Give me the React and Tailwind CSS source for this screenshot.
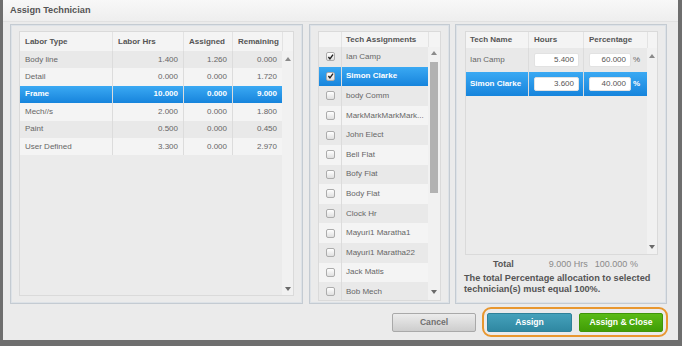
import React from 'react';

const labor = [
  ['Body line', '1.400', '1.260', '0.000'],
  ['Detail', '0.000', '0.000', '1.720'],
  ['Frame', '10.000', '0.000', '9.000'],
  ['Mech//s', '2.000', '0.000', '1.800'],
  ['Paint', '0.500', '0.000', '0.450'],
  ['User Defined', '3.300', '0.000', '2.970'],
];

const techs = [
  'Ian Camp', 'Simon Clarke', 'body Comm', 'MarkMarkMarkMark...', 'John Elect', 'Bell Flat',
  'Bofy Flat', 'Body Flat', 'Clock Hr', 'Mayuri1 Maratha1', 'Mayuri1 Maratha22', 'Jack Matis', 'Bob Mech',
];

const rowBg = (i, sel) =>
  sel ? 'bg-linear-to-b from-[#3aa9f3] to-[#1584dc] text-white font-bold' : i % 2 === 0 ? 'bg-[#e9e9e9] text-[#666]' : 'bg-[#f4f4f4] text-[#666]';

const Up = () => (
  <svg width="6" height="4" viewBox="0 0 6 4"><path d="M0 4 L3 0 L6 4 Z" fill="#8a8a8a" /></svg>
);
const Down = () => (
  <svg width="6" height="4" viewBox="0 0 6 4"><path d="M0 0 L3 4 L6 0 Z" fill="#6a6a6a" /></svg>
);

const Check = ({ on }) => (
  <span className="w-[9px] h-[9px] rounded-[2px] border border-[#acacac] bg-linear-to-b from-white to-[#e0e0e0] flex items-center justify-center">
    {on && (
      <svg viewBox="0 0 10 10" className="w-[8px] h-[8px]">
        <path d="M2 5 L4.2 7.6 L8.6 1.6" stroke="#222" strokeWidth="2" fill="none" />
      </svg>
    )}
  </span>
);

const Panel = ({ className, children }) => (
  <div className={'border border-[#c4cbd2] shadow-[inset_0_0_0_1px_#dde2e7] flex flex-col ' + className}>{children}</div>
);

const Input = ({ value, w }) => (
  <div className={'h-[14px] bg-white rounded-[2px] border border-[#e2e2e2] text-[#555] font-normal text-right pr-[4px] leading-[12px] ' + w}>{value}</div>
);

export default function App() {
  return (
    <div className="w-[682px] h-[346px] bg-[#6e6e6e] overflow-hidden font-['Liberation_Sans',Arial,sans-serif]">
      <div className="ml-[3px] w-[675px] h-[340px] bg-[#ebebeb] flex flex-col">
        {/* title */}
        <div className="h-[22px] shrink-0 bg-linear-to-b from-[#f8f8f8] to-[#eeeeee] border-b border-[#e1e1e1] pl-[7px] flex items-center text-[9.2px] font-bold text-[#555]">
          Assign Technician
        </div>

        {/* panels */}
        <div className="flex mt-[2px] pl-[7px] h-[280px] shrink-0">
          {/* labor */}
          <Panel className="w-[293px] pt-[6px] px-[8px] pb-[7px]">
            <div className="flex flex-1 border border-[#dadada] text-[8px]">
              <div className="flex flex-col w-[262px]">
                <div className="flex h-[19px] bg-[#f4f4f4] text-[#555] font-bold items-center">
                  <div className="w-[93px] pl-[5px] border-r border-[#e3e3e3] h-full flex items-center">Labor Type</div>
                  <div className="w-[71px] pl-[5px] border-r border-[#e3e3e3] h-full flex items-center">Labor Hrs</div>
                  <div className="w-[49px] pl-[5px] border-r border-[#e3e3e3] h-full flex items-center">Assigned</div>
                  <div className="w-[49px] pl-[5px] h-full flex items-center">Remaining</div>
                </div>
                {labor.map((r, i) => (
                  <div key={r[0]} className={'flex h-[17.4px] items-center ' + rowBg(i, i === 2)}>
                    <div className="w-[93px] pl-[5px] border-r border-[#dcdcdc] h-full flex items-center">{r[0]}</div>
                    <div className="w-[71px] pr-[5px] border-r border-[#dcdcdc] h-full flex items-center justify-end">{r[1]}</div>
                    <div className="w-[49px] pr-[5px] border-r border-[#dcdcdc] h-full flex items-center justify-end">{r[2]}</div>
                    <div className="w-[49px] pr-[5px] h-full flex items-center justify-end">{r[3]}</div>
                  </div>
                ))}
                <div className="flex-1 bg-[#ebebeb]" />
              </div>
              <div className="flex flex-col w-[13px]">
                <div className="h-[19px] bg-[#f4f4f4] border-l border-[#e3e3e3]" />
                <div className="flex-1 bg-[#f1f1f1] flex flex-col items-center justify-between pt-[6px] pb-[4px]">
                  <Up />
                  <Down />
                </div>
              </div>
            </div>
          </Panel>

          {/* tech list */}
          <Panel className="w-[141px] ml-[6px] pt-[6px] px-[8px] pb-[2px]">
            <div className="flex flex-1 border border-[#dadada] text-[8px] overflow-hidden">
              <div className="flex flex-col w-[110px]">
                <div className="flex h-[15px] shrink-0 bg-[#f4f4f4] text-[#555] font-bold items-center">
                  <div className="w-[23px] h-full border-r border-[#e3e3e3]" />
                  <div className="pl-[4px]">Tech Assignments</div>
                </div>
                {techs.map((t, i) => (
                  <div key={t} className={'flex h-[19.6px] shrink-0 items-center ' + rowBg(i, i === 1)}>
                    <div className="w-[23px] h-full border-r border-[#dcdcdc] flex items-center justify-center">
                      <Check on={i < 2} />
                    </div>
                    <div className="pl-[4px] whitespace-nowrap">{t}</div>
                  </div>
                ))}
              </div>
              <div className="flex flex-col w-[12px]">
                <div className="h-[15px] bg-[#f4f4f4] border-l border-[#e3e3e3]" />
                <div className="flex-1 bg-[#f1f1f1] flex flex-col items-center pt-[4px] pb-[6px]">
                  <Up />
                  <div className="mt-[7px] w-[8px] h-[131px] bg-[#b2b2b2]" />
                  <div className="flex-1" />
                  <Down />
                </div>
              </div>
            </div>
          </Panel>

          {/* selected techs */}
          <Panel className="w-[212px] ml-[5px] pt-[6px] pl-[9px] pr-[8px]">
            <div className="flex h-[224px] border border-[#dadada] text-[8px]">
              <div className="flex flex-col w-[181px]">
                <div className="flex h-[16px] bg-[#f4f4f4] text-[#555] font-bold items-center">
                  <div className="w-[63px] pl-[4px] border-r border-[#e3e3e3] h-full flex items-center">Tech Name</div>
                  <div className="w-[55px] pl-[5px] border-r border-[#e3e3e3] h-full flex items-center">Hours</div>
                  <div className="w-[63px] pl-[5px] h-full flex items-center">Percentage</div>
                </div>
                {[['Ian Camp', '5.400', '60.000'], ['Simon Clarke', '3.600', '40.000']].map((r, i) => (
                  <div key={r[0]} className={'flex h-[24px] items-center ' + rowBg(i, i === 1)}>
                    <div className="w-[63px] pl-[4px] border-r border-[#dcdcdc] h-full flex items-center">{r[0]}</div>
                    <div className="w-[55px] pl-[5px] border-r border-[#dcdcdc] h-full flex items-center">
                      <Input value={r[1]} w="w-[45px]" />
                    </div>
                    <div className="w-[63px] pl-[5px] h-full flex items-center gap-[2px]">
                      <Input value={r[2]} w="w-[42px]" />
                      <span>%</span>
                    </div>
                  </div>
                ))}
                <div className="flex-1 bg-[#ebebeb]" />
              </div>
              <div className="flex flex-col w-[11px]">
                <div className="h-[16px] bg-[#f4f4f4] border-l border-[#e3e3e3]" />
                <div className="flex-1 bg-[#f1f1f1] flex flex-col items-center justify-between pt-[6px] pb-[5px]">
                  <Up />
                  <Down />
                </div>
              </div>
            </div>
            <div className="flex items-center mt-[4px] h-[11px] text-[9px] leading-[11px]">
              <span className="ml-[28px] font-bold text-[#555]">Total</span>
              <span className="w-[74px] text-right text-[#8a8a8a]">9.000 Hrs</span>
              <span className="ml-[7px] text-[#8a8a8a]">100.000 %</span>
            </div>
            <div className="mt-[3px] -ml-[1px] text-[9.2px] leading-[11px] font-bold text-[#555]">
              The total Percentage allocation to selected technician(s) must equal 100%.
            </div>
          </Panel>
        </div>

        {/* buttons */}
        <div className="flex justify-end items-center pr-[10px] mt-[3px]">
          <button className="w-[84px] h-[19px] rounded-[2px] border border-[#a9a9a9] bg-linear-to-b from-[#ececec] to-[#cdcdcd] text-[#707070] text-[8.6px] font-bold">
            Cancel
          </button>
          <div className="ml-[6px] h-[30px] border-2 border-[#e8972f] rounded-[9px] flex items-center px-[3px] gap-[7px]">
            <button className="w-[85px] h-[19px] rounded-[2px] border border-[#2f8199] bg-linear-to-b from-[#45a1bb] to-[#2f88a2] text-white text-[8.6px] font-bold">
              Assign
            </button>
            <button className="w-[84px] h-[19px] rounded-[2px] border border-[#3f950a] bg-linear-to-b from-[#5abb16] to-[#409d06] text-white text-[8.6px] font-bold">
              Assign &amp; Close
            </button>
          </div>
        </div>
      </div>
    </div>
  );
}
